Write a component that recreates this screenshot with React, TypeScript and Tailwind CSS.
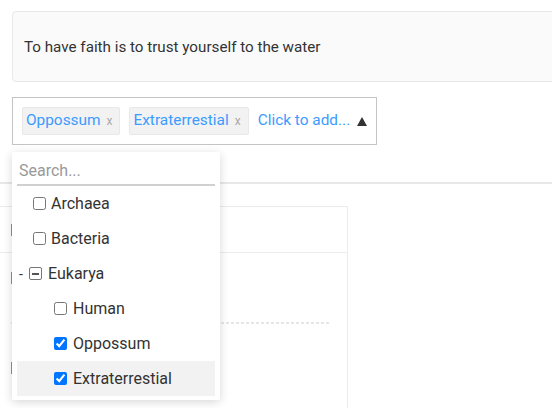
import React from "react";

function Box({ checked }: { checked?: boolean }) {
  return (
    <input
      type="checkbox"
      checked={!!checked}
      readOnly
      className="w-[13px] h-[13px] shrink-0"
    />
  );
}

function Indeterminate() {
  return (
    <span className="w-[13px] h-[13px] shrink-0 rounded-[2px] border border-[#767676] bg-white flex items-center justify-center">
      <span className="block w-[7px] h-[2px] bg-[#555]" />
    </span>
  );
}

function Tag({ label }: { label: string }) {
  return (
    <div className="h-[28px] flex items-center pl-[3px] pr-[7px] bg-[#f2f2f2] border border-[#e8e8e8] rounded-[2px]">
      <span className="text-[15.4px] text-[#3b9bff]">{label}</span>
      <span className="ml-[6px] text-[12px] text-[#aaa]">x</span>
    </div>
  );
}

function Mark() {
  return <span className="block w-[1px] h-[12px] bg-[#b98659]" />;
}

export default function App() {
  return (
    <div
      className="relative w-[552px] h-[408px] overflow-hidden bg-white text-[#333]"
      style={{ fontFamily: "Roboto, 'Liberation Sans', Arial, sans-serif" }}
    >
      <div className="pt-[11px] pl-[12px]">
        <div className="w-[560px] h-[71px] bg-[#fafafa] border border-[#e8e8e8] rounded-[4px] flex items-center pl-[11px] pt-[1px]">
          <span className="text-[15.2px] text-[#333]">To have faith is to trust yourself to the water</span>
        </div>

        <div className="relative mt-[15px] w-[365px] h-[48px] border border-[#c4c4c4] flex items-center pl-[9px] gap-[9px]">
          <Tag label="Oppossum" />
          <Tag label="Extraterrestial" />
          <span className="text-[15.4px] text-[#3b9bff]">Click to add...</span>
          <svg width="10" height="9" viewBox="0 0 10 9" className="ml-[-2px] mt-[1px]">
            <polygon points="5,0 10,9 0,9" fill="#333" />
          </svg>

          <div className="absolute left-[-1px] top-[54px] z-10 w-[208px] bg-white rounded-[2px] shadow-[0_2px_10px_rgba(0,0,0,0.16)] px-[5px] pt-[5px] pb-[4px]">
            <input
              placeholder="Search..."
              readOnly
              className="block w-full h-[29px] pl-[2px] border-b-2 border-[#d0d0d0] text-[16px] outline-none placeholder:text-[#999]"
            />
            <div className="flex flex-col text-[16px] text-[#333]">
              <div className="h-[35px] flex items-center pl-[16px] gap-[5px]">
                <Box />
                <span>Archaea</span>
              </div>
              <div className="h-[35px] flex items-center pl-[16px] gap-[5px]">
                <Box />
                <span>Bacteria</span>
              </div>
              <div className="h-[35px] flex items-center pl-[2px]">
                <span className="w-[10px] text-[14px] leading-none">-</span>
                <Indeterminate />
                <span className="ml-[6px]">Eukarya</span>
              </div>
              <div className="h-[35px] flex items-center pl-[37px] gap-[6px]">
                <Box />
                <span>Human</span>
              </div>
              <div className="h-[35px] flex items-center pl-[37px] gap-[6px]">
                <Box checked />
                <span>Oppossum</span>
              </div>
              <div className="h-[35px] flex items-center pl-[37px] gap-[6px] bg-[#f2f2f2]">
                <Box checked />
                <span>Extraterrestial</span>
              </div>
            </div>
          </div>
        </div>
      </div>

      <div className="mt-[37px] h-[2px] bg-[#e8e8e8]" />

      <div className="mt-[22px] w-[348px] h-[220px] border-t border-r border-[#ececec]">
        <div className="h-[46px] border-b border-[#ececec] flex items-center pl-[11px]">
          <Mark />
        </div>
        <div className="pl-[11px] pr-[18px] pt-[19px]">
          <Mark />
          <div className="mt-[38px] h-[2px] bg-[repeating-linear-gradient(90deg,#e6e6e6_0_3px,transparent_3px_5px)]" />
          <div className="mt-[38px]">
            <Mark />
          </div>
        </div>
      </div>
    </div>
  );
}
